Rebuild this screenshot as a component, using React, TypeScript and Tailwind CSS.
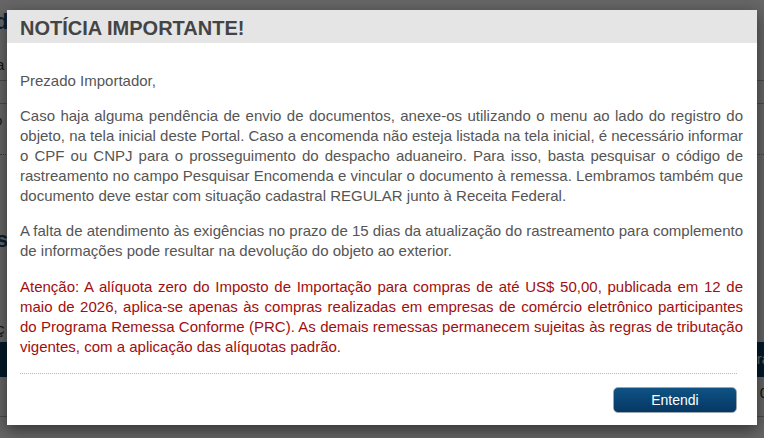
import React from 'react';

function BackgroundPage() {
  return (
    <div className="h-full w-full bg-white font-['Liberation_Sans',Arial,sans-serif] text-[#333]">
      <div className="h-[12px]" />
      <div className="flex h-[20px] items-center text-[22px] font-bold leading-none text-[#1b4f7a]">
        <span className="-ml-[5px]">d</span>
      </div>
      <div className="h-[26px]" />
      <div className="flex h-[14px] items-center -ml-[4px] text-[15px]">a</div>
      <div className="mt-[8px] border-t border-[#bbb]" />
      <div className="mt-[22px] border-t border-[#bbb]" />
      <div className="mt-[12px] -ml-[5px] flex h-[10px] items-center text-[13px]">o</div>
      <div className="mt-[28px] border-t border-dotted border-[#999]" />
      <div className="mt-[74px] -ml-[4px] flex h-[20px] items-center text-[22px] font-bold text-[#1b4f7a]">s</div>
      <div className="mt-[74px] -ml-[3px] flex h-[12px] items-center text-[15px]">ç</div>
      <div className="mt-[7px] flex h-[35px] items-center justify-end bg-[#0b3f64] text-[15px] text-white">
        <span className="-mr-[6px]">ra</span>
      </div>
      <div className="mt-[10px] flex h-[12px] items-center justify-end text-[15px]">
        <span className="-mr-[4px]">0</span>
      </div>
      <div className="mt-[17px] border-t border-[#bbb]" />
    </div>
  );
}

export default function App() {
  return (
    <div className="relative h-[438px] w-full overflow-hidden">
      <BackgroundPage />

      {/* overlay */}
      <div className="absolute inset-0 bg-black/60" />

      {/* modal */}
      <div className="absolute left-[7px] top-[10px] w-[750px] bg-white font-['Liberation_Sans',Arial,sans-serif] shadow-[0_5px_15px_rgba(0,0,0,0.5)]">
        <div className="bg-[#e5e5e5] pb-[3px] pl-[13px] pt-[7px]">
          <h1 className="text-[20px] font-bold leading-[23px] text-[#444]">NOTÍCIA IMPORTANTE!</h1>
        </div>

        <div className="pl-[13px] pr-[14px] pt-[28px] text-justify text-[15px] leading-[20px] text-[#555]">
          <p className="mb-[15px]">Prezado Importador,</p>
          <p className="mb-[15px]">
            Caso haja alguma pendência de envio de documentos, anexe-os utilizando o menu ao lado do registro do
            objeto, na tela inicial deste Portal. Caso a encomenda não esteja listada na tela inicial, é necessário
            informar o CPF ou CNPJ para o prosseguimento do despacho aduaneiro. Para isso, basta pesquisar o código
            de rastreamento no campo Pesquisar Encomenda e vincular o documento à remessa. Lembramos também que
            documento deve estar com situação cadastral REGULAR junto à Receita Federal.
          </p>
          <p className="mb-[16px]">
            A falta de atendimento às exigências no prazo de 15 dias da atualização do rastreamento para complemento
            de informações pode resultar na devolução do objeto ao exterior.
          </p>
          <p className="text-[#a10e0e]">
            Atenção: A alíquota zero do Imposto de Importação para compras de até US$ 50,00, publicada em 12 de maio
            de 2026, aplica-se apenas às compras realizadas em empresas de comércio eletrônico participantes do
            Programa Remessa Conforme (PRC). As demais remessas permanecem sujeitas às regras de tributação vigentes,
            com a aplicação das alíquotas padrão.
          </p>
        </div>

        <div className="ml-[13px] mr-[20px] mt-[16px] border-t border-dotted border-[#bbb]" />

        <div className="flex justify-end pb-[12px] pr-[20px] pt-[13px]">
          <button className="h-[26px] w-[124px] rounded-[5px] border border-[#9aa5ae] bg-gradient-to-b from-[#0e5384] to-[#063764] text-[14px] leading-none text-white">
            Entendi
          </button>
        </div>
      </div>
    </div>
  );
}
